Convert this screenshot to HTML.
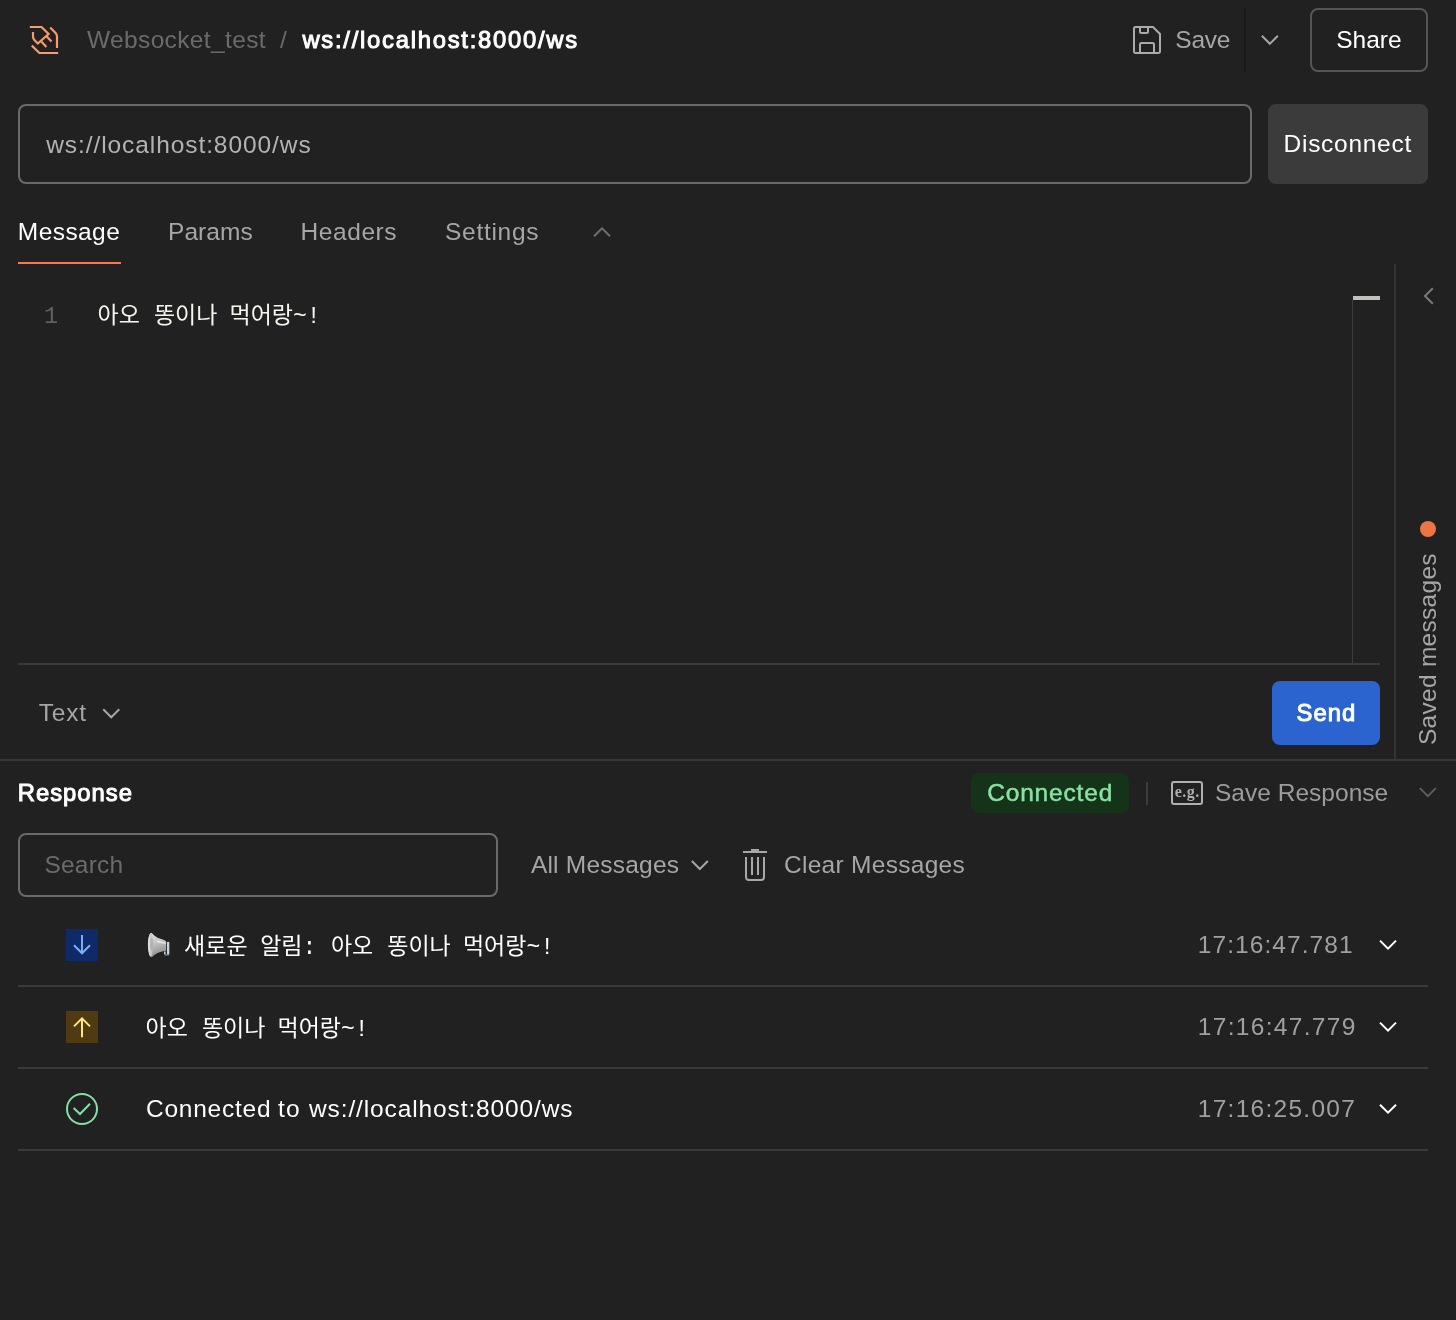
<!DOCTYPE html>
<html><head><meta charset="utf-8"><title>Postman WebSocket</title>
<style>
html,body{margin:0;padding:0}
body{width:1456px;height:1320px;background:#212121;position:relative;overflow:hidden;font-family:"Liberation Sans",sans-serif;will-change:transform;-webkit-font-smoothing:antialiased}
.t{position:absolute;white-space:pre;line-height:32px}
</style></head><body>
<svg style="position:absolute;left:0px;top:0px;overflow:visible" width="1" height="1" viewBox="0 0 1 1" ><g fill="none" stroke="#f79a6c" stroke-width="2.2" stroke-linejoin="miter"><path d="M29.8 27H41.5L48.6 34L37.8 43.5L34.4 40Q33 38.5 33 36.5V32"/><path d="M46.6 36.2L51.5 41.6M41.3 41.6L46.4 47"/><path d="M50.2 27.4L55.6 32.9Q57 34.4 57 36.5V48"/><path d="M31.8 45.6L39.4 53H58.2"/></g></svg>
<span class="t" style="left:87.00px;top:24.00px;font-size:24.5px;font-weight:400;color:#6b6b6b;letter-spacing:0.362px;">Websocket_test</span>
<span class="t" style="left:280.00px;top:24.00px;font-size:24.5px;font-weight:400;color:#6b6b6b;letter-spacing:0px;">/</span>
<span class="t" style="left:302.40px;top:24.00px;font-size:23.8px;font-weight:400;color:#ffffff;letter-spacing:1.743px;-webkit-text-stroke:1px #ffffff;">ws://localhost:8000/ws</span>
<svg style="position:absolute;left:0px;top:0px;overflow:visible" width="1" height="1" viewBox="0 0 1 1" ><g fill="none" stroke="#ababab" stroke-width="2" stroke-linejoin="round"><path d="M1135.5 27H1153L1160 34V51.5A1.5 1.5 0 0 1 1158.5 53H1135.5A1.5 1.5 0 0 1 1134 51.5V28.5A1.5 1.5 0 0 1 1135.5 27Z"/><path d="M1140 27V31.5A1.5 1.5 0 0 0 1141.5 33H1146.5A1.5 1.5 0 0 0 1148 31.5V27"/><path d="M1140 53V44.5A1.5 1.5 0 0 1 1141.5 43H1152.5A1.5 1.5 0 0 1 1154 44.5V53"/></g></svg>
<span class="t" style="left:1175.30px;top:23.70px;font-size:24.5px;font-weight:400;color:#a6a6a6;letter-spacing:-0.233px;">Save</span>
<div style="position:absolute;left:1244px;top:8px;width:2px;height:64px;background:#1a1a1a"></div>
<svg style="position:absolute;left:0;top:0;overflow:visible" width="1" height="1"><path d="M1261.85 35.8L1269.85 43.8L1277.85 35.8" fill="none" stroke="#a6a6a6" stroke-width="2"/></svg>
<div style="position:absolute;left:1310px;top:8px;width:118px;height:64px;box-sizing:border-box;border:2px solid #555;border-radius:8px"></div>
<span class="t" style="left:1336.20px;top:23.70px;font-size:24.5px;font-weight:400;color:#ffffff;letter-spacing:0.0px;">Share</span>
<div style="position:absolute;left:18px;top:104px;width:1234px;height:80px;box-sizing:border-box;border:2px solid #6a6a6a;border-radius:8px"></div>
<span class="t" style="left:46.25px;top:128.50px;font-size:24.5px;font-weight:400;color:#b3b3b3;letter-spacing:0.917px;">ws://localhost:8000/ws</span>
<div style="position:absolute;left:1268px;top:104px;width:160px;height:80px;background:#3b3b3b;border-radius:8px"></div>
<span class="t" style="left:1283.60px;top:127.90px;font-size:24.5px;font-weight:400;color:#ffffff;letter-spacing:0.711px;">Disconnect</span>
<span class="t" style="left:17.80px;top:216.40px;font-size:24.5px;font-weight:400;color:#ffffff;letter-spacing:0.433px;">Message</span>
<span class="t" style="left:168.00px;top:216.40px;font-size:24.5px;font-weight:400;color:#a6a6a6;letter-spacing:0.05px;">Params</span>
<span class="t" style="left:300.50px;top:216.40px;font-size:24.5px;font-weight:400;color:#a6a6a6;letter-spacing:0.583px;">Headers</span>
<span class="t" style="left:445.00px;top:216.40px;font-size:24.5px;font-weight:400;color:#a6a6a6;letter-spacing:0.714px;">Settings</span>
<div style="position:absolute;left:18px;top:262px;width:103px;height:2px;background:#f47b4c"></div>
<svg style="position:absolute;left:0;top:0;overflow:visible" width="1" height="1"><path d="M594 236.3L602 228.3L610 236.3" fill="none" stroke="#6f6f6f" stroke-width="2"/></svg>
<svg style="position:absolute;left:0px;top:0px;overflow:visible" width="1" height="1" viewBox="0 0 1 1" ><g font-family="'Liberation Mono','Noto Sans CJK KR',monospace" font-size="23px"><text x="43.96" y="323.2" fill="#606060" font-size="23.4px">1</text><text x="97.5" y="323" fill="#f5f5ec">아오</text><text x="153.9" y="323" fill="#f5f5ec">똥이나</text><text x="229.53" y="323" fill="#f5f5ec">먹어랑~!</text></g></svg>
<div style="position:absolute;left:1353px;top:296px;width:27px;height:4px;background:#c1c1b9"></div>
<div style="position:absolute;left:1352px;top:300px;width:1px;height:363px;background:#3d3d3d"></div>
<div style="position:absolute;left:18px;top:663px;width:1362px;height:2px;background:#3a3a3a"></div>
<div style="position:absolute;left:1394px;top:264px;width:2px;height:496px;background:#333"></div>
<svg style="position:absolute;left:0;top:0;overflow:visible" width="1" height="1"><path d="M1432.8000000000002 288.2L1425.0 296L1432.8000000000002 303.8" fill="none" stroke="#7a7a7a" stroke-width="2"/></svg>
<div style="position:absolute;left:1420px;top:521px;width:16px;height:16px;background:#ec7545;border-radius:50%"></div>
<span class="t" style="left:1412.30px;top:744.70px;font-size:24.5px;color:#a6a6a6;letter-spacing:0.277px;transform-origin:0 0;transform:rotate(-90deg)">Saved messages</span>
<span class="t" style="left:38.75px;top:697.25px;font-size:24.5px;font-weight:400;color:#a6a6a6;letter-spacing:0.833px;">Text</span>
<svg style="position:absolute;left:0;top:0;overflow:visible" width="1" height="1"><path d="M103.25 709.3L111.25 717.3L119.25 709.3" fill="none" stroke="#a6a6a6" stroke-width="2"/></svg>
<div style="position:absolute;left:1272px;top:681px;width:108px;height:64px;background:#2c64cf;border-radius:8px"></div>
<span class="t" style="left:1296.50px;top:696.60px;font-size:23.8px;font-weight:400;color:#ffffff;letter-spacing:1.033px;-webkit-text-stroke:1px #ffffff;">Send</span>
<div style="position:absolute;left:0px;top:759px;width:1456px;height:2px;background:#353535"></div>
<span class="t" style="left:17.75px;top:777.25px;font-size:23.8px;font-weight:400;color:#ffffff;letter-spacing:1.0px;-webkit-text-stroke:1px #ffffff;">Response</span>
<div style="position:absolute;left:971px;top:773px;width:158px;height:40px;background:#143319;border-radius:8px"></div>
<span class="t" style="left:987.20px;top:777.00px;font-size:24.5px;font-weight:400;color:#8ae2a2;letter-spacing:0.825px;-webkit-text-stroke:0.45px #8ae2a2;">Connected</span>
<div style="position:absolute;left:1146px;top:782px;width:2px;height:23px;background:#3d3d3d"></div>
<div style="position:absolute;left:1171px;top:781px;width:32px;height:24px;box-sizing:border-box;border:2px solid #b0b0b0;border-radius:3px"></div>
<span class="t" style="left:1174.80px;top:776.00px;font-family:'Liberation Serif',serif;font-size:16px;font-weight:700;color:#b0b0b0;letter-spacing:0.467px">e.g.</span>
<span class="t" style="left:1215.00px;top:777.00px;font-size:24.5px;font-weight:400;color:#9c9c9c;letter-spacing:0.017px;">Save Response</span>
<svg style="position:absolute;left:0;top:0;overflow:visible" width="1" height="1"><path d="M1419.85 788.1L1427.85 796.1L1435.85 788.1" fill="none" stroke="#5e5e5e" stroke-width="2"/></svg>
<div style="position:absolute;left:18px;top:833px;width:480px;height:64px;box-sizing:border-box;border:2px solid #6a6a6a;border-radius:8px"></div>
<span class="t" style="left:44.40px;top:849.00px;font-size:24.5px;font-weight:400;color:#6b6b6b;letter-spacing:0.24px;">Search</span>
<span class="t" style="left:530.90px;top:849.10px;font-size:24.5px;font-weight:400;color:#a6a6a6;letter-spacing:0.218px;">All Messages</span>
<svg style="position:absolute;left:0;top:0;overflow:visible" width="1" height="1"><path d="M691.85 861.0L699.85 869.0L707.85 861.0" fill="none" stroke="#a6a6a6" stroke-width="2"/></svg>
<svg style="position:absolute;left:0px;top:0px;overflow:visible" width="1" height="1" viewBox="0 0 1 1" ><g fill="none" stroke="#a8a8a8" stroke-width="2"><path d="M743 852H767M751 850H759M746 857V877A3 3 0 0 0 749 880H761A3 3 0 0 0 764 877V857M752 857V875M758 857V875"/></g></svg>
<span class="t" style="left:784.00px;top:849.10px;font-size:24.5px;font-weight:400;color:#a6a6a6;letter-spacing:0.285px;">Clear Messages</span>
<div style="position:absolute;left:66px;top:929px;width:32px;height:32px;background:#0f2a68"></div>
<svg style="position:absolute;left:0px;top:0px;overflow:visible" width="1" height="1" viewBox="0 0 1 1" ><path d="M82 935V953.3M74 945.3L82 953.3L90 945.3" fill="none" stroke="#7caef8" stroke-width="2"/></svg>
<div style="position:absolute;left:66px;top:1011px;width:32px;height:32px;background:#4f3a11"></div>
<svg style="position:absolute;left:0px;top:0px;overflow:visible" width="1" height="1" viewBox="0 0 1 1" ><path d="M82 1037.2V1018.4M74 1026.4L82 1018.4L90 1026.4" fill="none" stroke="#ffe680" stroke-width="2"/></svg>
<svg style="position:absolute;left:0px;top:0px;overflow:visible" width="1" height="1" viewBox="0 0 1 1" ><circle cx="82" cy="1109" r="15" fill="none" stroke="#84e0a3" stroke-width="2"/><path d="M73.6 1108L80 1114L90 1103.8" fill="none" stroke="#84e0a3" stroke-width="2"/></svg>
<svg style="position:absolute;left:140px;top:924px;overflow:visible" width="40" height="40" viewBox="0 0 40 40" ><defs><linearGradient id="mg" x1="0" y1="0" x2="0.25" y2="1"><stop offset="0" stop-color="#e2e2e2"/><stop offset="0.45" stop-color="#c6c6c6"/><stop offset="1" stop-color="#8e8e8e"/></linearGradient><linearGradient id="mb" x1="0" y1="0" x2="1" y2="0"><stop offset="0" stop-color="#e6e6e8"/><stop offset="1" stop-color="#b4b4b6"/></linearGradient></defs><path d="M27 17.9H29.3V30.4H27Z" fill="#c5d6e8"/><path d="M24 27.4H25.6V30.2H24Z" fill="#c5d6e8"/><path d="M24.2 30.2H29V31.5H25Z" fill="#8a8f96"/><path d="M11.2 8.8C13.5 10.5 15 12.5 17.5 13.7C20.5 15 23.5 15.3 26.2 17.3V26.8C22 27.5 18 28.5 15.8 30C13.8 31.3 12.8 32.6 11.5 33.2C9.5 32.5 7.9 27 7.9 21S9.3 9.5 11.2 8.8Z" fill="url(#mg)"/><ellipse cx="10.6" cy="21" rx="2.5" ry="11.6" fill="url(#mb)"/><ellipse cx="11.6" cy="20.5" rx="1.5" ry="6.5" fill="#b2b2b5"/><path d="M17 16.2C20 17.2 23 17.8 26 18.8V20.2C23 19.5 20 19 17 18.6Z" fill="#ececec" opacity="0.8"/></svg>
<svg style="position:absolute;left:0px;top:0px;overflow:visible" width="1" height="1" viewBox="0 0 1 1" ><g font-family="'Liberation Mono','Noto Sans CJK KR',monospace" font-size="23px" fill="#ffffff"><text x="184.12" y="954">새로운</text><text x="260.2" y="954">알림:</text><text x="330.9" y="954">아오</text><text x="387.3" y="954">똥이나</text><text x="462.93" y="954">먹어랑~!</text></g></svg>
<svg style="position:absolute;left:0px;top:0px;overflow:visible" width="1" height="1" viewBox="0 0 1 1" ><g font-family="'Liberation Mono','Noto Sans CJK KR',monospace" font-size="23px" fill="#ffffff"><text x="145.5" y="1036">아오</text><text x="201.9" y="1036">똥이나</text><text x="277.53" y="1036">먹어랑~!</text></g></svg>
<span class="t" style="left:1197.75px;top:929.00px;font-size:24.5px;font-weight:400;color:#a0a0a0;letter-spacing:1.068px;">17:16:47.781</span>
<span class="t" style="left:1197.75px;top:1011.20px;font-size:24.5px;font-weight:400;color:#a0a0a0;letter-spacing:1.314px;">17:16:47.779</span>
<span class="t" style="left:1197.75px;top:1093.00px;font-size:24.5px;font-weight:400;color:#a0a0a0;letter-spacing:1.277px;">17:16:25.007</span>
<span class="t" style="left:146.00px;top:1093.00px;font-size:24.5px;font-weight:400;color:#ffffff;letter-spacing:0.75px;">Connected</span>
<span class="t" style="left:278.00px;top:1093.00px;font-size:24.5px;font-weight:400;color:#ffffff;letter-spacing:1.25px;">to</span>
<span class="t" style="left:309.00px;top:1093.00px;font-size:24.5px;font-weight:400;color:#ffffff;letter-spacing:0.881px;">ws://localhost:8000/ws</span>
<svg style="position:absolute;left:0;top:0;overflow:visible" width="1" height="1"><path d="M1380 940.6L1388 948.6L1396 940.6" fill="none" stroke="#ffffff" stroke-width="2"/></svg>
<svg style="position:absolute;left:0;top:0;overflow:visible" width="1" height="1"><path d="M1380 1022.5999999999999L1388 1030.6L1396 1022.5999999999999" fill="none" stroke="#ffffff" stroke-width="2"/></svg>
<svg style="position:absolute;left:0;top:0;overflow:visible" width="1" height="1"><path d="M1380 1104.7L1388 1112.7L1396 1104.7" fill="none" stroke="#ffffff" stroke-width="2"/></svg>
<div style="position:absolute;left:18px;top:985px;width:1410px;height:2px;background:#3a3a3a"></div>
<div style="position:absolute;left:18px;top:1067px;width:1410px;height:2px;background:#3a3a3a"></div>
<div style="position:absolute;left:18px;top:1149px;width:1410px;height:2px;background:#3a3a3a"></div>
</body></html>
